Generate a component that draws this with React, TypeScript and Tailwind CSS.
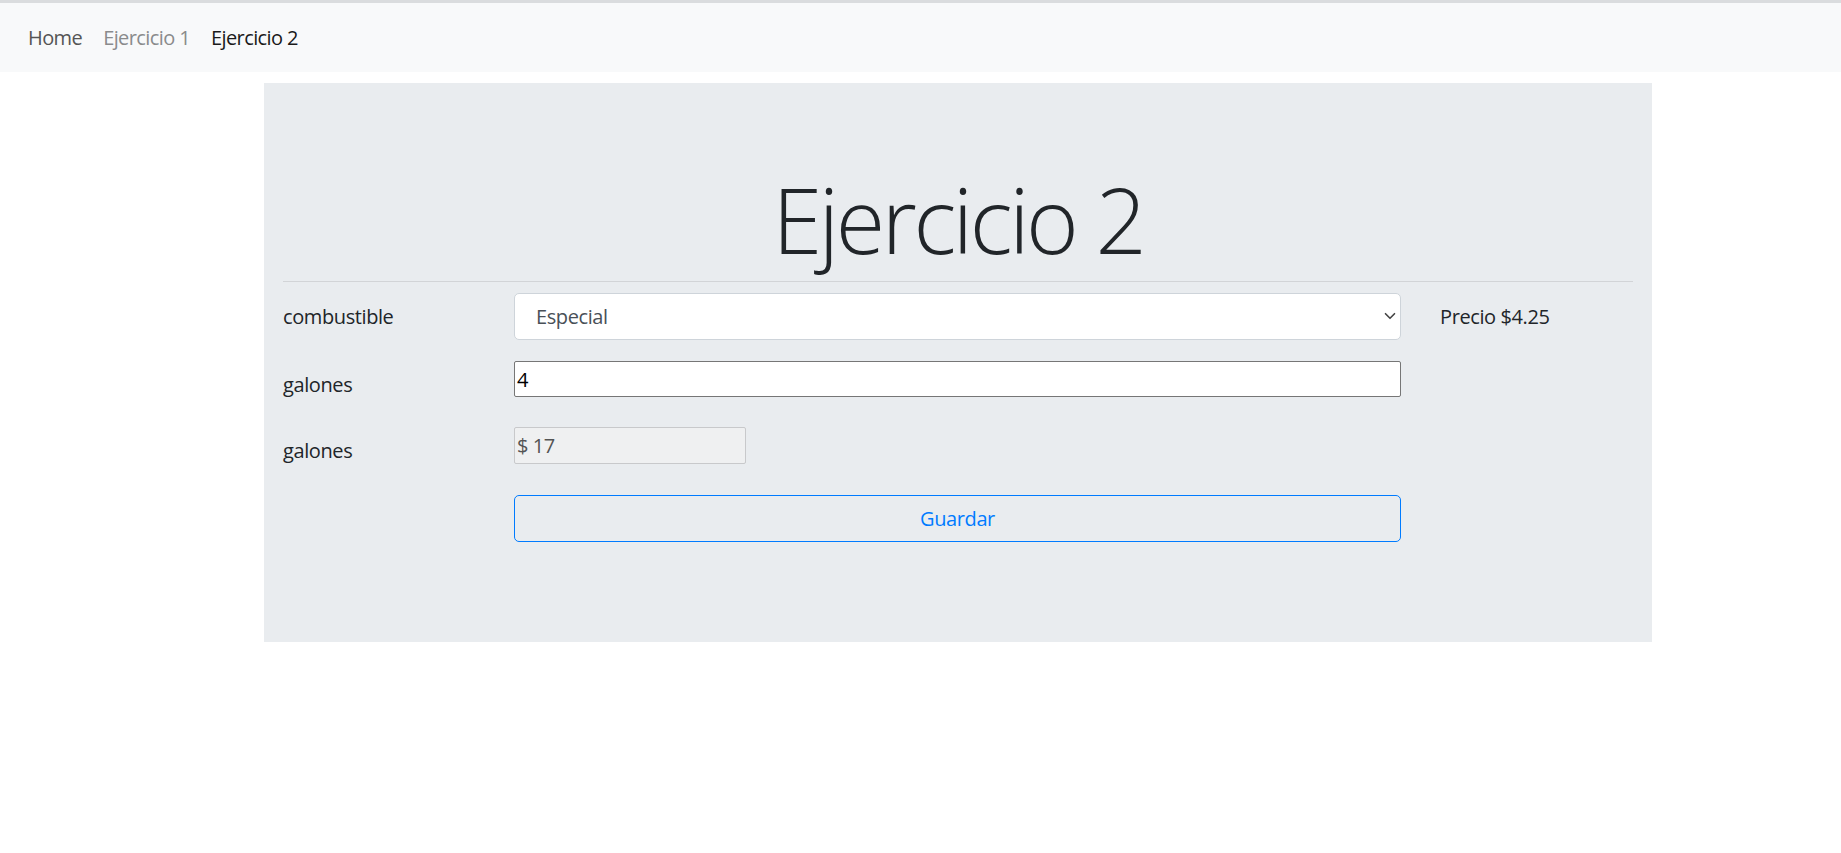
import { ChevronDown } from "lucide-react";

const font = { fontFamily: '"Open Sans", "Noto Sans", Arial, sans-serif' };

function Row({ label, children, extra }: { label: string; children: React.ReactNode; extra?: React.ReactNode }) {
    return (
        <div className="flex items-start">
            <label className="w-[231px] shrink-0 pt-[9px] pb-[10px] leading-[30px] text-[20px] tracking-[-0.4px] text-[#212529]">{label}</label>
            <div className="w-[887px] shrink-0">{children}</div>
            <div className="ml-[39px] pt-[9px] leading-[30px] text-[20px] tracking-[-0.4px] text-[#212529]">{extra}</div>
        </div>
    );
}

export default function App() {
    return (
        <div className="min-h-screen bg-white text-[#212529]" style={font}>
            <nav className="flex h-[72px] items-center gap-[21px] border-t-[3px] border-[#dadcde] bg-[#f8f9fa] px-[28px] text-[20px] leading-[30px] tracking-[-0.6px]">
                <a className="text-[#555]">Home</a>
                <a className="text-[#8a8b8c]">Ejercicio 1</a>
                <a className="text-[#1a1a1a]">Ejercicio 2</a>
            </nav>

            <div className="ml-[264px] mt-[11px] w-[1388px] bg-[#e9ecef] px-[19px] pt-[82px] pb-[100px]">
                <h1 className="text-center text-[90px] font-light leading-[108px] tracking-[-3.4px] text-[#212529]">Ejercicio 2</h1>
                <hr className="mt-[8px] border-t border-[#d2d4d7]" />

                <div className="mt-[11px]">
                    <Row label="combustible" extra="Precio $4.25">
                        <div className="relative">
                            <select
                                defaultValue="Especial"
                                className="h-[47px] w-full appearance-none rounded-[5px] border border-[#ced4da] bg-white pl-[21px] text-[20px] tracking-[-0.4px] text-[#495057] outline-none"
                            >
                                <option>Regular</option>
                                <option>Especial</option>
                                <option>Diesel</option>
                            </select>
                            <ChevronDown className="pointer-events-none absolute right-[2px] top-[14px] h-[18px] w-[18px] text-[#444]" strokeWidth={2.2} />
                        </div>
                    </Row>
                </div>

                <div className="mt-[19px]">
                    <Row label="galones">
                        <input
                            defaultValue="4"
                            className="h-[36px] w-full rounded-[2px] border border-[#767676] bg-white px-[2px] text-[20px] text-black outline-none"
                        />
                    </Row>
                </div>

                <div className="mt-[17px]">
                    <Row label="galones">
                        <input
                            disabled
                            value="$ 17"
                            readOnly
                            className="h-[37px] w-[232px] rounded-[2px] border border-[#c8c9cb] bg-[#eff0f1] px-[2px] text-[20px] tracking-[-0.4px] text-[#545454]"
                        />
                    </Row>
                </div>

                <div className="mt-[19px] flex">
                    <div className="w-[231px] shrink-0" />
                    <button className="h-[47px] w-[887px] rounded-[5px] border border-[#007bff] text-[20px] tracking-[-0.4px] text-[#007bff]">
                        Guardar
                    </button>
                </div>
            </div>
        </div>
    );
}
